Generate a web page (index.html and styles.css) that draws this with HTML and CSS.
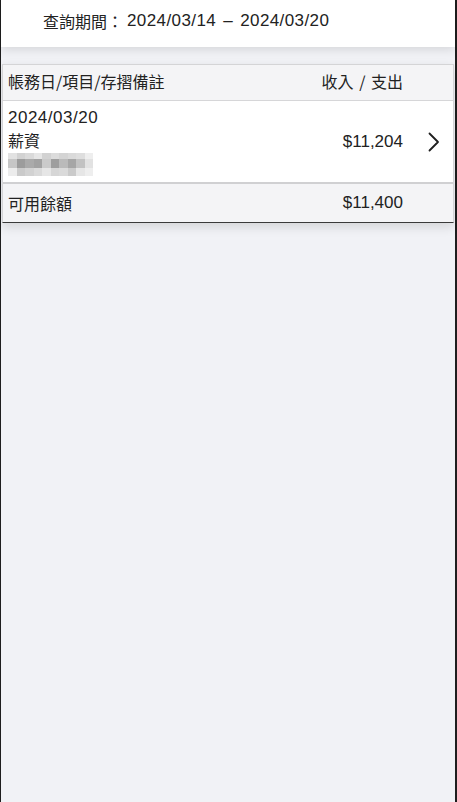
FILE: index.html
```html
<!DOCTYPE html>
<html lang="zh-Hant">
<head>
<meta charset="utf-8">
<title>查詢</title>
<link rel="stylesheet" href="styles.css">
</head>
<body>
<div class="frame">
  <header class="period">
    <span class="zh">查詢期間：</span><span class="dates">2024/03/14 – 2024/03/20</span>
  </header>
  <main class="content">
    <section class="card">
      <div class="row head">
        <span class="zh">帳務日/項目/存摺備註</span>
        <span class="amt zh io">收入 / 支出</span>
        <span class="go"></span>
      </div>
      <div class="row item">
        <div class="info">
          <div class="date">2024/03/20</div>
          <div class="zh name">薪資</div>
          <div class="mosaic" aria-hidden="true">
            <div class="mrow r1"><i style="background:#e2e2e2"></i><i style="background:#d2d2d2"></i><i style="background:#dadada"></i><i style="background:#e6e6e6"></i><i style="background:#d2d2d2"></i><i style="background:#dcdcdc"></i><i style="background:#d4d4d4"></i><i style="background:#dadada"></i><i style="background:#dedede"></i><i style="background:#eeeeee"></i></div>
            <div class="mrow r2"><i style="background:#c6c6c6"></i><i style="background:#9c9c9c"></i><i style="background:#aaaaaa"></i><i style="background:#a2a2a2"></i><i style="background:#cacaca"></i><i style="background:#9e9e9e"></i><i style="background:#bababa"></i><i style="background:#a6a6a6"></i><i style="background:#c2c2c2"></i><i style="background:#e2e2e2"></i></div>
            <div class="mrow r3"><i style="background:#ececec"></i><i style="background:#cacaca"></i><i style="background:#d2d2d2"></i><i style="background:#dadada"></i><i style="background:#e6e6e6"></i><i style="background:#d6d6d6"></i><i style="background:#dadada"></i><i style="background:#cacaca"></i><i style="background:#e6e6e6"></i><i style="background:#eeeeee"></i></div>
          </div>
        </div>
        <span class="amt">$11,204</span>
        <span class="go">
          <svg width="12" height="20" viewBox="0 0 12 20"><polyline points="1.5,1.5 10,10 1.5,18.5" fill="none" stroke="#1f1f1f" stroke-width="1.8" stroke-linecap="round" stroke-linejoin="round"/></svg>
        </span>
      </div>
      <div class="row foot">
        <span class="zh">可用餘額</span>
        <span class="amt">$11,400</span>
        <span class="go"></span>
      </div>
    </section>
  </main>
</div>
</body>
</html>
```
FILE: styles.css
```css
* { box-sizing: border-box; }
html, body { margin: 0; padding: 0; height: 100%; }
body {
  font-family: "Liberation Sans", "Noto Sans CJK TC", sans-serif;
  font-size: 17px;
  color: #222;
  background: #f1f2f6;
}
.zh { font-family: "Noto Sans CJK TC", sans-serif; font-size: 16px; }
.frame {
  height: 100vh;
  border-left: 1px solid #1e1e1e;
  border-right: 2px solid #1e1e1e;
  background: #f1f2f6;
  display: flex;
  flex-direction: column;
}
.period {
  height: 47px;
  background: #fff;
  display: flex;
  align-items: center;
  padding: 0 0 6px 42px;
  box-shadow: 0 2px 10px rgba(0,0,0,0.13);
  position: relative;
  z-index: 1;
}
.period .dates { margin-left: 4px; letter-spacing: 0.4px; word-spacing: 2px; }
.content { padding-top: 17px; }
.card {
  margin: 0 1px;
  border: 1px solid #d4d4d6;
  border-bottom: 1px solid #3a3a3a;
  background: #fff;
  box-shadow: 0 4px 10px rgba(0,0,0,0.12);
}
.row {
  display: flex;
  align-items: center;
  padding-left: 5px;
}
.row .amt { margin-left: auto; }
.io { word-spacing: 2px; }
.row .go { width: 50px; display: flex; align-items: center; padding-left: 25px; }
.head {
  height: 36px;
  background: #f4f4f6;
  border-bottom: 1px solid #d6d6d8;
  padding-bottom: 3px;
}
.item {
  height: 83px;
  background: #fff;
  border-bottom: 2px solid #d0d0d2;
}
.info { display: flex; flex-direction: column; }
.date { line-height: 22px; letter-spacing: 0.5px; }
.name { line-height: 22px; }
.mosaic { display: flex; flex-direction: column; width: 85px; margin-top: 2px; }
.mrow { display: flex; }
.mrow i { flex: 1; }
.r1 { height: 6px; }
.r2 { height: 9px; }
.r3 { height: 8px; }
.foot {
  height: 38px;
  background: #f4f4f6;
}
```
